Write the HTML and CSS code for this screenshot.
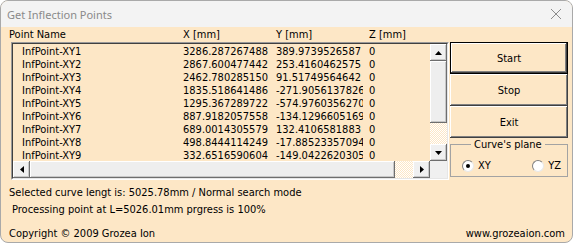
FILE: index.html
```html
<!DOCTYPE html>
<html>
<head>
<meta charset="utf-8">
<title>Get Inflection Points</title>
<link rel="stylesheet" href="styles.css">
</head>
<body>
<div class="window">
  <div class="titlebar">
    <span class="title">Get Inflection Points</span>
    <svg class="close" viewBox="0 0 12 12" width="12" height="12"><path d="M1 1 L11 11 M11 1 L1 11" stroke="#8c8c8c" stroke-width="1" fill="none"/></svg>
  </div>
  <div class="client">
    <div class="top">
      <div class="left">
        <div class="colhead">
          <span class="h-name">Point Name</span>
          <span class="h-x">X [mm]</span>
          <span class="h-y">Y [mm]</span>
          <span class="h-z">Z [mm]</span>
        </div>
        <div class="listbox">
          <div class="lb-inner">
            <div class="lb-body">
              <div class="rows">
                <div class="row"><span class="r-name">InfPoint-XY1</span><span class="r-x">3286.287267488</span><span class="r-y"><span class="clip">389.9739526587</span></span><span class="r-z">0</span></div>
                <div class="row"><span class="r-name">InfPoint-XY2</span><span class="r-x">2867.600477442</span><span class="r-y"><span class="clip">253.4160462575</span></span><span class="r-z">0</span></div>
                <div class="row"><span class="r-name">InfPoint-XY3</span><span class="r-x">2462.780285150</span><span class="r-y"><span class="clip">91.51749564642</span></span><span class="r-z">0</span></div>
                <div class="row"><span class="r-name">InfPoint-XY4</span><span class="r-x">1835.518641486</span><span class="r-y"><span class="clip">-271.90561378265</span></span><span class="r-z">0</span></div>
                <div class="row"><span class="r-name">InfPoint-XY5</span><span class="r-x">1295.367289722</span><span class="r-y"><span class="clip">-574.97603562701</span></span><span class="r-z">0</span></div>
                <div class="row"><span class="r-name">InfPoint-XY6</span><span class="r-x">887.9182057558</span><span class="r-y"><span class="clip">-134.12966051693</span></span><span class="r-z">0</span></div>
                <div class="row"><span class="r-name">InfPoint-XY7</span><span class="r-x">689.0014305579</span><span class="r-y"><span class="clip">132.4106581883</span></span><span class="r-z">0</span></div>
                <div class="row"><span class="r-name">InfPoint-XY8</span><span class="r-x">498.8444114249</span><span class="r-y"><span class="clip">-17.885233570941</span></span><span class="r-z">0</span></div>
                <div class="row"><span class="r-name">InfPoint-XY9</span><span class="r-x">332.6516590604</span><span class="r-y"><span class="clip">-149.04226203051</span></span><span class="r-z">0</span></div>
              </div>
              <div class="vscroll">
                <div class="sbtn"><svg viewBox="0 0 7 4" width="7" height="4"><polygon points="3.5,0 7,4 0,4" fill="#000"/></svg></div>
                <div class="vthumb"></div>
                <div class="track"></div>
                <div class="sbtn"><svg viewBox="0 0 7 4" width="7" height="4"><polygon points="0,0 7,0 3.5,4" fill="#000"/></svg></div>
              </div>
            </div>
            <div class="hscroll">
              <div class="sbtn"><svg viewBox="0 0 4 7" width="4" height="7"><polygon points="4,0 4,7 0,3.5" fill="#000"/></svg></div>
              <div class="hthumb"></div>
              <div class="track"></div>
              <div class="sbtn"><svg viewBox="0 0 4 7" width="4" height="7"><polygon points="0,0 4,3.5 0,7" fill="#000"/></svg></div>
              <div class="corner"></div>
            </div>
          </div>
        </div>
      </div>
      <div class="right">
        <div class="btn default">Start</div>
        <div class="btn">Stop</div>
        <div class="btn">Exit</div>
        <fieldset class="group">
          <legend class="legend">Curve's plane</legend>
          <div class="radios">
            <label class="radio"><span class="dot checked"></span><span>XY</span></label>
            <label class="radio"><span class="dot"></span><span>YZ</span></label>
          </div>
        </fieldset>
      </div>
    </div>
    <div class="status1">Selected curve lengt is: 5025.78mm / Normal search mode</div>
    <div class="status2">Processing point at L=5026.01mm prgress is 100%</div>
    <div class="footer">
      <span>Copyright © 2009 Grozea Ion</span>
      <span>www.grozeaion.com</span>
    </div>
  </div>
</div>
</body>
</html>
```

FILE: styles.css
```css
* { box-sizing: border-box; }
html, body { margin: 0; padding: 0; background: #ffffff; }
body { width: 573px; height: 243px; overflow: hidden; }

.window {
  width: 573px;
  height: 243px;
  border: 1px solid #a9a9a9;
  border-radius: 8px;
  overflow: hidden;
  background: #fde7c6;
  display: flex;
  flex-direction: column;
  font-family: "DejaVu Sans Condensed", "Liberation Sans", sans-serif;
  font-size: 11px;
  line-height: 13px;
  color: #000;
}

.titlebar {
  height: 26px;
  flex: none;
  background: #f3f3f3;
  display: flex;
  align-items: center;
  justify-content: space-between;
  padding: 0 10px 0 6px;
}
.title {
  font-family: "Noto Sans", "Open Sans", sans-serif;
  font-size: 11px;
  color: #8a8a8a;
}
.close { display: block; }

.client { flex: 1; display: flex; flex-direction: column; }

.top { display: flex; }
.left { width: 448px; flex: none; }

.colhead {
  height: 15px;
  display: flex;
  align-items: center;
  padding-left: 8px;
  white-space: nowrap;
}
.h-name { width: 174px; }
.h-x, .h-y { width: 93px; }

.listbox {
  margin-left: 10px;
  width: 438px;
  height: 138px;
  border: 1px solid;
  border-color: #9a9a9a #ffffff #ffffff #9a9a9a;
}
.lb-inner {
  width: 100%;
  height: 100%;
  border: 1px solid;
  border-color: #404040 #e6e6e6 #e6e6e6 #404040;
  display: flex;
  flex-direction: column;
}
.lb-body { display: flex; height: 117px; }
.rows { flex: 1; padding-top: 1px; overflow: hidden; }
.row { height: 13px; display: flex; white-space: nowrap; }
.r-name { width: 170px; padding-left: 9px; }
.r-x { width: 93px; }
.r-y { width: 93px; }
.clip { display: block; width: 87px; overflow: hidden; text-overflow: clip; }

.vscroll { width: 17px; display: flex; flex-direction: column; }
.sbtn {
  width: 17px;
  height: 17px;
  flex: none;
  background: #f0f0f0;
  box-shadow: inset -1px -1px #6e6e6e, inset 1px 1px #ffffff, inset -2px -2px #c8c8c8;
  display: flex;
  align-items: center;
  justify-content: center;
}
.sbtn svg { display: block; }
.vthumb {
  height: 62px;
  flex: none;
  background: #eeeeee;
  box-shadow: inset -1px -1px #6e6e6e, inset 1px 1px #ffffff, inset -2px -2px #c8c8c8;
}
.track {
  flex: 1;
  background: repeating-conic-gradient(#ffffff 0 25%, #fde7c6 0 50%) 0 0 / 2px 2px;
}
.hscroll { display: flex; height: 17px; }
.hthumb {
  width: 365px;
  flex: none;
  background: #eeeeee;
  box-shadow: inset -1px -1px #6e6e6e, inset 1px 1px #ffffff, inset -2px -2px #c8c8c8;
}
.corner { width: 17px; flex: none; background: #f0f0f0; }

.right {
  width: 118px;
  margin-left: 1px;
  margin-top: 15px;
  display: flex;
  flex-direction: column;
}
.btn {
  height: 32px;
  display: flex;
  align-items: center;
  justify-content: center;
  background: #fde7c6;
  box-shadow: inset -1px -1px #404040, inset 1px 1px #ffffff, inset -2px -2px #808080;
}
.btn.default {
  border: 1px solid #000;
}

.group {
  margin: 0;
  padding: 8px 6px 4px 11px;
  border: 1px solid #a3a3a3;
  min-width: 0;
}
.legend {
  padding: 0 3px;
  margin-left: 9px;
  line-height: 13px;
}
.radios {
  height: 13px;
  display: flex;
  justify-content: space-between;
  align-items: center;
}
.radio { display: flex; align-items: center; gap: 4px; }
.dot {
  width: 12px;
  height: 12px;
  border-radius: 50%;
  background: #ffffff;
  border: 1px solid;
  border-color: #808080 #e8e8e8 #e8e8e8 #808080;
  display: flex;
  align-items: center;
  justify-content: center;
}
.dot.checked::after {
  content: "";
  width: 4px;
  height: 4px;
  border-radius: 50%;
  background: #000;
}

.status1 { margin-top: 6px; height: 13px; padding-left: 8px; white-space: nowrap; }
.status2 { margin-top: 4px; height: 13px; padding-left: 11px; white-space: nowrap; }
.footer {
  margin-top: 11px;
  height: 13px;
  display: flex;
  justify-content: space-between;
  padding: 0 7px 0 8px;
}
```
